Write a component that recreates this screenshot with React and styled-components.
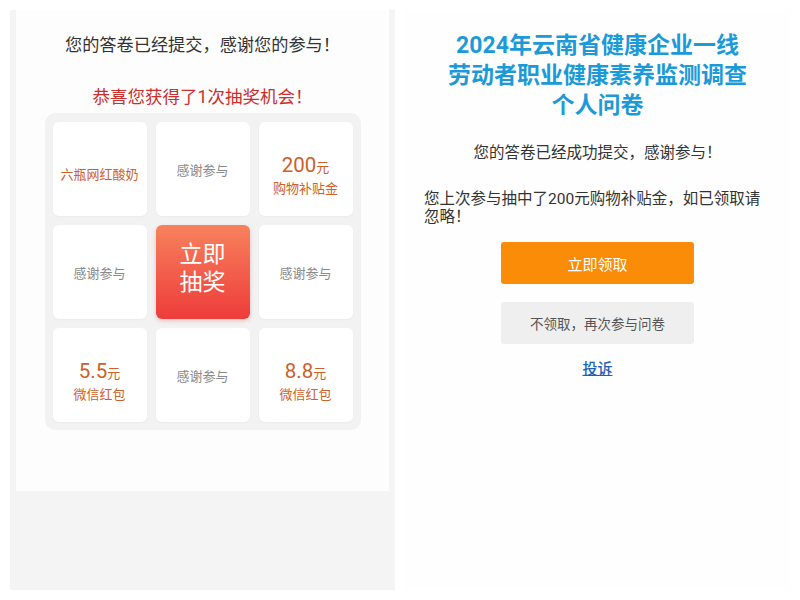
import React from 'react'
import styled, { createGlobalStyle } from 'styled-components'

const GlobalStyle = createGlobalStyle`
    body {
        margin: 0;
        background: #fff;
        font-family: Roboto, "Noto Sans CJK SC", "Noto Sans", sans-serif;
    }
    * { box-sizing: border-box; }
`;

const prizes = [
    { kind: 'text', label: '六瓶网红酸奶' },
    { kind: 'thanks' },
    { kind: 'money', amount: '200', label: '购物补贴金' },
    { kind: 'thanks' },
    { kind: 'draw' },
    { kind: 'thanks' },
    { kind: 'money', amount: '5.5', label: '微信红包' },
    { kind: 'thanks' },
    { kind: 'money', amount: '8.8', label: '微信红包' },
];

function Prize({ item }) {
    if (item.kind === 'draw') {
        return <DrawButton>立即<br />抽奖</DrawButton>
    }
    if (item.kind === 'thanks') {
        return <Cell><Thanks>感谢参与</Thanks></Cell>
    }
    if (item.kind === 'text') {
        return <Cell $shift><PrizeLabel>{item.label}</PrizeLabel></Cell>
    }
    return (
        <Cell $shift>
            <Amount>{item.amount}<Unit>元</Unit></Amount>
            <PrizeLabel>{item.label}</PrizeLabel>
        </Cell>
    )
}

function App() {
    return (
        <Page>
            <GlobalStyle />
            <LeftPanel>
                <Card>
                    <Thanksline>您的答卷已经提交，感谢您的参与！</Thanksline>
                    <Congrats>恭喜您获得了1次抽奖机会！</Congrats>
                    <Board>
                        {prizes.map((p, i) => <Prize key={i} item={p} />)}
                    </Board>
                </Card>
            </LeftPanel>
            <RightPanel>
                <Title>2024年云南省健康企业一线<br />劳动者职业健康素养监测调查<br />个人问卷</Title>
                <Notice>您的答卷已经成功提交，感谢参与！</Notice>
                <Para>您上次参与抽中了200元购物补贴金，如已领取请忽略！</Para>
                <Button $primary>立即领取</Button>
                <Button>不领取，再次参与问卷</Button>
                <Link href="#">投诉</Link>
            </RightPanel>
        </Page>
    )
}

const Page = styled.div`
    display: flex;
    gap: 10px;
    padding: 10px;
`;
const LeftPanel = styled.section`
    width: 385px;
    height: 580px;
    background: #f4f4f4;
    padding: 0 6px;
`;
const Card = styled.div`
    height: 481px;
    background: #fdfdfd;
    padding-top: 23px;
    display: flex;
    flex-direction: column;
    align-items: center;
`;
const Thanksline = styled.p`
    margin: 0;
    font-size: 17.2px;
    line-height: 24px;
    color: #333;
`;
const Congrats = styled.p`
    margin: 28px 0 0;
    font-size: 17.5px;
    line-height: 24px;
    color: #cc2e2b;
`;
const Board = styled.div`
    margin-top: 4px;
    display: grid;
    grid-template-columns: repeat(3, 94px);
    grid-auto-rows: 94px;
    gap: 9px;
    padding: 9px 8px 8px;
    background: #f2f2f2;
    border-radius: 10px;
`;
const Cell = styled.div`
    background: #fff;
    border-radius: 6px;
    display: flex;
    flex-direction: column;
    align-items: center;
    justify-content: center;
    padding-top: ${p => (p.$shift ? '12px' : '0')};
    box-shadow: 0 1px 2px rgba(0, 0, 0, 0.03);
`;
const Thanks = styled.span`
    font-size: 13px;
    color: #8a8a8a;
`;
const PrizeLabel = styled.span`
    font-size: 13px;
    line-height: 18px;
    color: #cd6028;
`;
const Amount = styled.span`
    font-size: 20.5px;
    line-height: 24px;
    color: #cd6028;
`;
const Unit = styled.span`
    font-size: 13px;
`;
const DrawButton = styled.div`
    border-radius: 6px;
    background: linear-gradient(180deg, #f7825d 0%, #ee3c3a 100%);
    color: #fff;
    font-size: 23px;
    line-height: 28px;
    padding-bottom: 6px;
    display: flex;
    align-items: center;
    justify-content: center;
    text-align: center;
    box-shadow: 0 2px 4px rgba(230, 60, 50, 0.25);
`;
const RightPanel = styled.section`
    width: 385px;
    height: 580px;
    background: #fefefe;
    padding: 21px 19px 0;
    display: flex;
    flex-direction: column;
    align-items: center;
`;
const Title = styled.h1`
    margin: 0;
    font-size: 23px;
    line-height: 30px;
    font-weight: 700;
    color: #1c9ad8;
    text-align: center;
`;
const Notice = styled.p`
    margin: 21px 0 0;
    font-size: 15.5px;
    line-height: 22px;
    color: #333;
`;
const Para = styled.p`
    align-self: stretch;
    margin: 26px 0 0;
    font-size: 15.5px;
    line-height: 18px;
    color: #333;
`;
const Button = styled.button`
    width: 193px;
    height: 42px;
    margin-top: ${p => (p.$primary ? '16px' : '18px')};
    border: none;
    border-radius: 3px;
    background: ${p => (p.$primary ? '#fa8c07' : '#efefef')};
    color: ${p => (p.$primary ? '#fff' : '#555')};
    font-family: inherit;
    font-size: ${p => (p.$primary ? '15px' : '13.5px')};
    cursor: pointer;
`;
const Link = styled.a`
    margin-top: 14px;
    font-size: 15px;
    line-height: 22px;
    font-weight: 500;
    color: #1d5fb8;
    text-decoration: underline;
`;

export default App
